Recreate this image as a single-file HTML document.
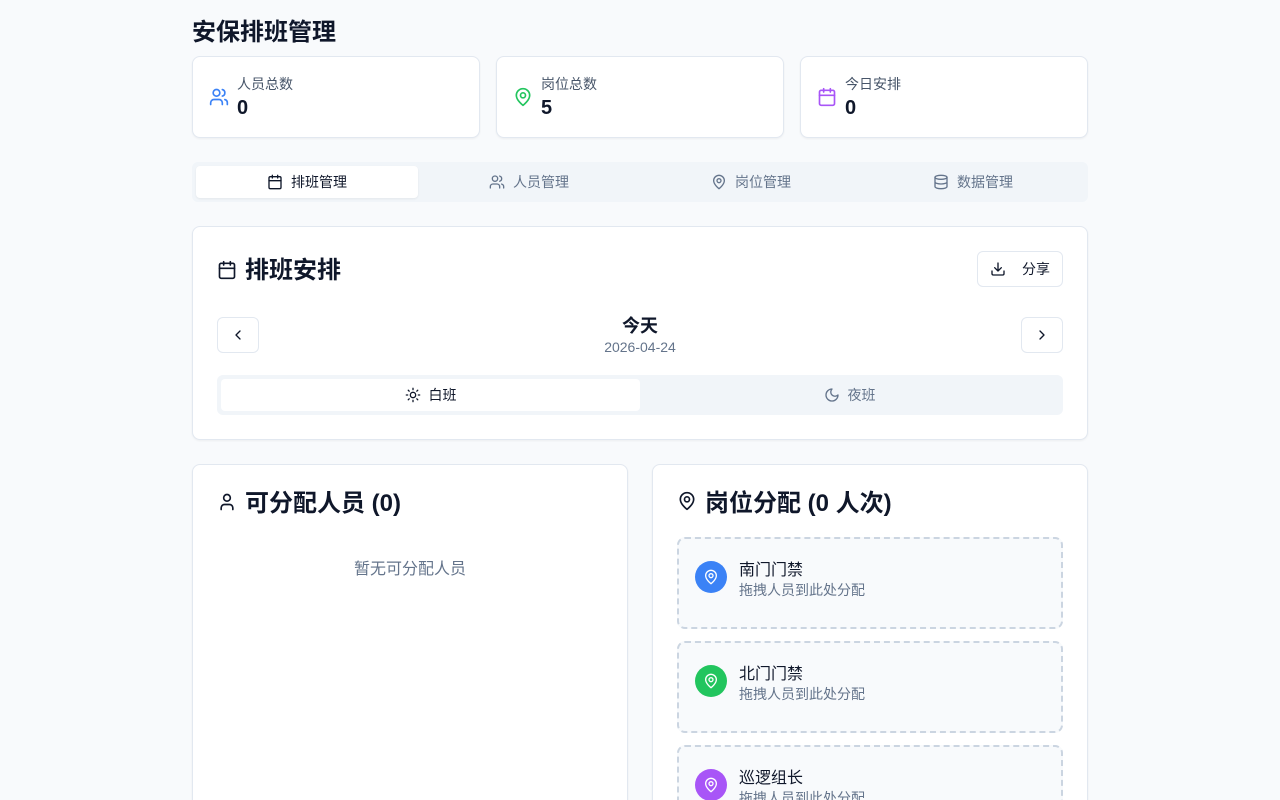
<!DOCTYPE html><html style="height:800px;overflow:hidden"><head><meta charset="utf-8"><style>
*{box-sizing:border-box;margin:0;padding:0}
body{width:1280px;height:800px;overflow:hidden;background:#f8fafc;font-family:"Liberation Sans","Noto Sans CJK SC",sans-serif;color:#0f172a;position:relative}
.a{position:absolute}
.card{position:absolute;background:#fff;border:1px solid #e2e8f0;border-radius:8px;box-shadow:0 1px 2px rgba(0,0,0,.05)}
svg{fill:none;stroke-width:2;stroke-linecap:round;stroke-linejoin:round}
.lbl{font-size:14px;color:#475569}
.num{font-size:20px;font-weight:bold;color:#0f172a}
.tab{position:absolute;top:4px;height:32px;width:222px;display:flex;align-items:center;justify-content:center;gap:8px;font-size:14px;color:#64748b}
.btn{position:absolute;border:1px solid #e2e8f0;border-radius:6px;background:#fff;display:flex;align-items:center;justify-content:center}
.post{position:absolute;left:24px;width:386px;height:92px;border:2px dashed #cbd5e1;border-radius:8px;background:#f8fafc}
.dot{position:absolute;left:16px;top:22px;width:32px;height:32px;border-radius:50%;display:flex;align-items:center;justify-content:center}
.pn{position:absolute;left:60px;top:17px;font-size:16px;color:#0f172a}
.ps{position:absolute;left:60px;top:41px;font-size:14px;color:#64748b}
</style></head><body>
<div class="a" style="left:192px;top:12px;font-size:24px;font-weight:bold">安保排班管理</div>

<div class="card" style="left:192px;top:56px;width:288px;height:82px">
<svg class="a" style="left:16px;top:30px" width="20" height="20" viewBox="0 0 24 24" stroke="#3b82f6"><path d="M16 21v-2a4 4 0 0 0-4-4H6a4 4 0 0 0-4 4v2"/><circle cx="9" cy="7" r="4"/><path d="M22 21v-2a4 4 0 0 0-3-3.87M16 3.13a4 4 0 0 1 0 7.75"/></svg>
<div class="a lbl" style="left:44px;top:17px">人员总数</div><div class="a num" style="left:44px;top:40px">0</div></div>
<div class="card" style="left:496px;top:56px;width:288px;height:82px">
<svg class="a" style="left:16px;top:30px" width="20" height="20" viewBox="0 0 24 24" stroke="#22c55e"><path d="M20 10c0 6-8 12-8 12s-8-6-8-12a8 8 0 0 1 16 0Z"/><circle cx="12" cy="10" r="3"/></svg>
<div class="a lbl" style="left:44px;top:17px">岗位总数</div><div class="a num" style="left:44px;top:40px">5</div></div>
<div class="card" style="left:800px;top:56px;width:288px;height:82px">
<svg class="a" style="left:16px;top:30px" width="20" height="20" viewBox="0 0 24 24" stroke="#a855f7"><rect x="3" y="4" width="18" height="18" rx="2"/><path d="M16 2v4M8 2v4M3 10h18"/></svg>
<div class="a lbl" style="left:44px;top:17px">今日安排</div><div class="a num" style="left:44px;top:40px">0</div></div>

<div class="a" style="left:192px;top:162px;width:896px;height:40px;background:#f1f5f9;border-radius:6px">
<div class="tab" style="left:4px;background:#fff;border-radius:4px;color:#0f172a;box-shadow:0 1px 2px rgba(0,0,0,.06)"><svg width="16" height="16" viewBox="0 0 24 24" stroke="#0f172a"><rect x="3" y="4" width="18" height="18" rx="2"/><path d="M16 2v4M8 2v4M3 10h18"/></svg>排班管理</div>
<div class="tab" style="left:226px"><svg width="16" height="16" viewBox="0 0 24 24" stroke="#64748b"><path d="M16 21v-2a4 4 0 0 0-4-4H6a4 4 0 0 0-4 4v2"/><circle cx="9" cy="7" r="4"/><path d="M22 21v-2a4 4 0 0 0-3-3.87M16 3.13a4 4 0 0 1 0 7.75"/></svg>人员管理</div>
<div class="tab" style="left:448px"><svg width="16" height="16" viewBox="0 0 24 24" stroke="#64748b"><path d="M20 10c0 6-8 12-8 12s-8-6-8-12a8 8 0 0 1 16 0Z"/><circle cx="12" cy="10" r="3"/></svg>岗位管理</div>
<div class="tab" style="left:670px"><svg width="16" height="16" viewBox="0 0 24 24" stroke="#64748b"><ellipse cx="12" cy="5" rx="9" ry="3"/><path d="M3 5v14c0 1.7 4 3 9 3s9-1.3 9-3V5M3 12c0 1.7 4 3 9 3s9-1.3 9-3"/></svg>数据管理</div>
</div>

<div class="card" style="left:192px;top:226px;width:896px;height:214px">
<svg class="a" style="left:24px;top:33px" width="20" height="20" viewBox="0 0 24 24" stroke="#0f172a"><rect x="3" y="4" width="18" height="18" rx="2"/><path d="M16 2v4M8 2v4M3 10h18"/></svg>
<div class="a" style="left:52px;top:23px;font-size:24px;font-weight:bold">排班安排</div>
<div class="btn" style="left:784px;top:24px;width:86px;height:36px;gap:16px;font-size:14px"><svg width="16" height="16" viewBox="0 0 24 24" stroke="#0f172a"><path d="M21 15v4a2 2 0 0 1-2 2H5a2 2 0 0 1-2-2v-4M7 10l5 5 5-5M12 15V3"/></svg>分享</div>
<div class="btn" style="left:24px;top:90px;width:42px;height:36px"><svg width="16" height="16" viewBox="0 0 24 24" stroke="#0f172a"><path d="m15 18-6-6 6-6"/></svg></div>
<div class="btn" style="left:828px;top:90px;width:42px;height:36px"><svg width="16" height="16" viewBox="0 0 24 24" stroke="#0f172a"><path d="m9 18 6-6-6-6"/></svg></div>
<div class="a" style="left:0;width:894px;top:85px;text-align:center;font-size:18px;font-weight:bold">今天</div>
<div class="a" style="left:0;width:894px;top:112px;text-align:center;font-size:14px;color:#64748b">2026-04-24</div>
<div class="a" style="left:24px;top:148px;width:846px;height:40px;background:#f1f5f9;border-radius:6px">
<div class="tab" style="left:4px;width:419px;background:#fff;border-radius:4px;color:#0f172a"><svg width="16" height="16" viewBox="0 0 24 24" stroke="#0f172a"><circle cx="12" cy="12" r="4"/><path d="M12 2v2M12 20v2M4.9 4.9l1.4 1.4M17.7 17.7l1.4 1.4M2 12h2M20 12h2M6.3 17.7l-1.4 1.4M19.1 4.9l-1.4 1.4"/></svg>白班</div>
<div class="tab" style="left:423px;width:419px"><svg width="16" height="16" viewBox="0 0 24 24" stroke="#64748b"><path d="M12 3a6 6 0 0 0 9 9 9 9 0 1 1-9-9Z"/></svg>夜班</div>
</div></div>

<div class="card" style="left:192px;top:464px;width:436px;height:360px">
<svg class="a" style="left:24px;top:27px" width="20" height="20" viewBox="0 0 24 24" stroke="#0f172a"><path d="M19 21v-2a4 4 0 0 0-4-4H9a4 4 0 0 0-4 4v2"/><circle cx="12" cy="7" r="4"/></svg>
<div class="a" style="left:52px;top:18px;font-size:24px;font-weight:bold">可分配人员 (0)</div>
<div class="a" style="left:0;width:434px;top:90px;text-align:center;font-size:16px;color:#64748b">暂无可分配人员</div>
</div>

<div class="card" style="left:652px;top:464px;width:436px;height:360px">
<svg class="a" style="left:24px;top:26px" width="20" height="20" viewBox="0 0 24 24" stroke="#0f172a"><path d="M20 10c0 6-8 12-8 12s-8-6-8-12a8 8 0 0 1 16 0Z"/><circle cx="12" cy="10" r="3"/></svg>
<div class="a" style="left:52px;top:18px;font-size:24px;font-weight:bold">岗位分配 (0 人次)</div>
<div class="post" style="top:72px"><div class="dot" style="background:#3b82f6"><svg width="16" height="16" viewBox="0 0 24 24" stroke="#fff"><path d="M20 10c0 6-8 12-8 12s-8-6-8-12a8 8 0 0 1 16 0Z"/><circle cx="12" cy="10" r="3"/></svg></div><div class="pn">南门门禁</div><div class="ps">拖拽人员到此处分配</div></div>
<div class="post" style="top:176px"><div class="dot" style="background:#22c55e"><svg width="16" height="16" viewBox="0 0 24 24" stroke="#fff"><path d="M20 10c0 6-8 12-8 12s-8-6-8-12a8 8 0 0 1 16 0Z"/><circle cx="12" cy="10" r="3"/></svg></div><div class="pn">北门门禁</div><div class="ps">拖拽人员到此处分配</div></div>
<div class="post" style="top:280px"><div class="dot" style="background:#a855f7"><svg width="16" height="16" viewBox="0 0 24 24" stroke="#fff"><path d="M20 10c0 6-8 12-8 12s-8-6-8-12a8 8 0 0 1 16 0Z"/><circle cx="12" cy="10" r="3"/></svg></div><div class="pn">巡逻组长</div><div class="ps">拖拽人员到此处分配</div></div>
</div>
</body></html>
